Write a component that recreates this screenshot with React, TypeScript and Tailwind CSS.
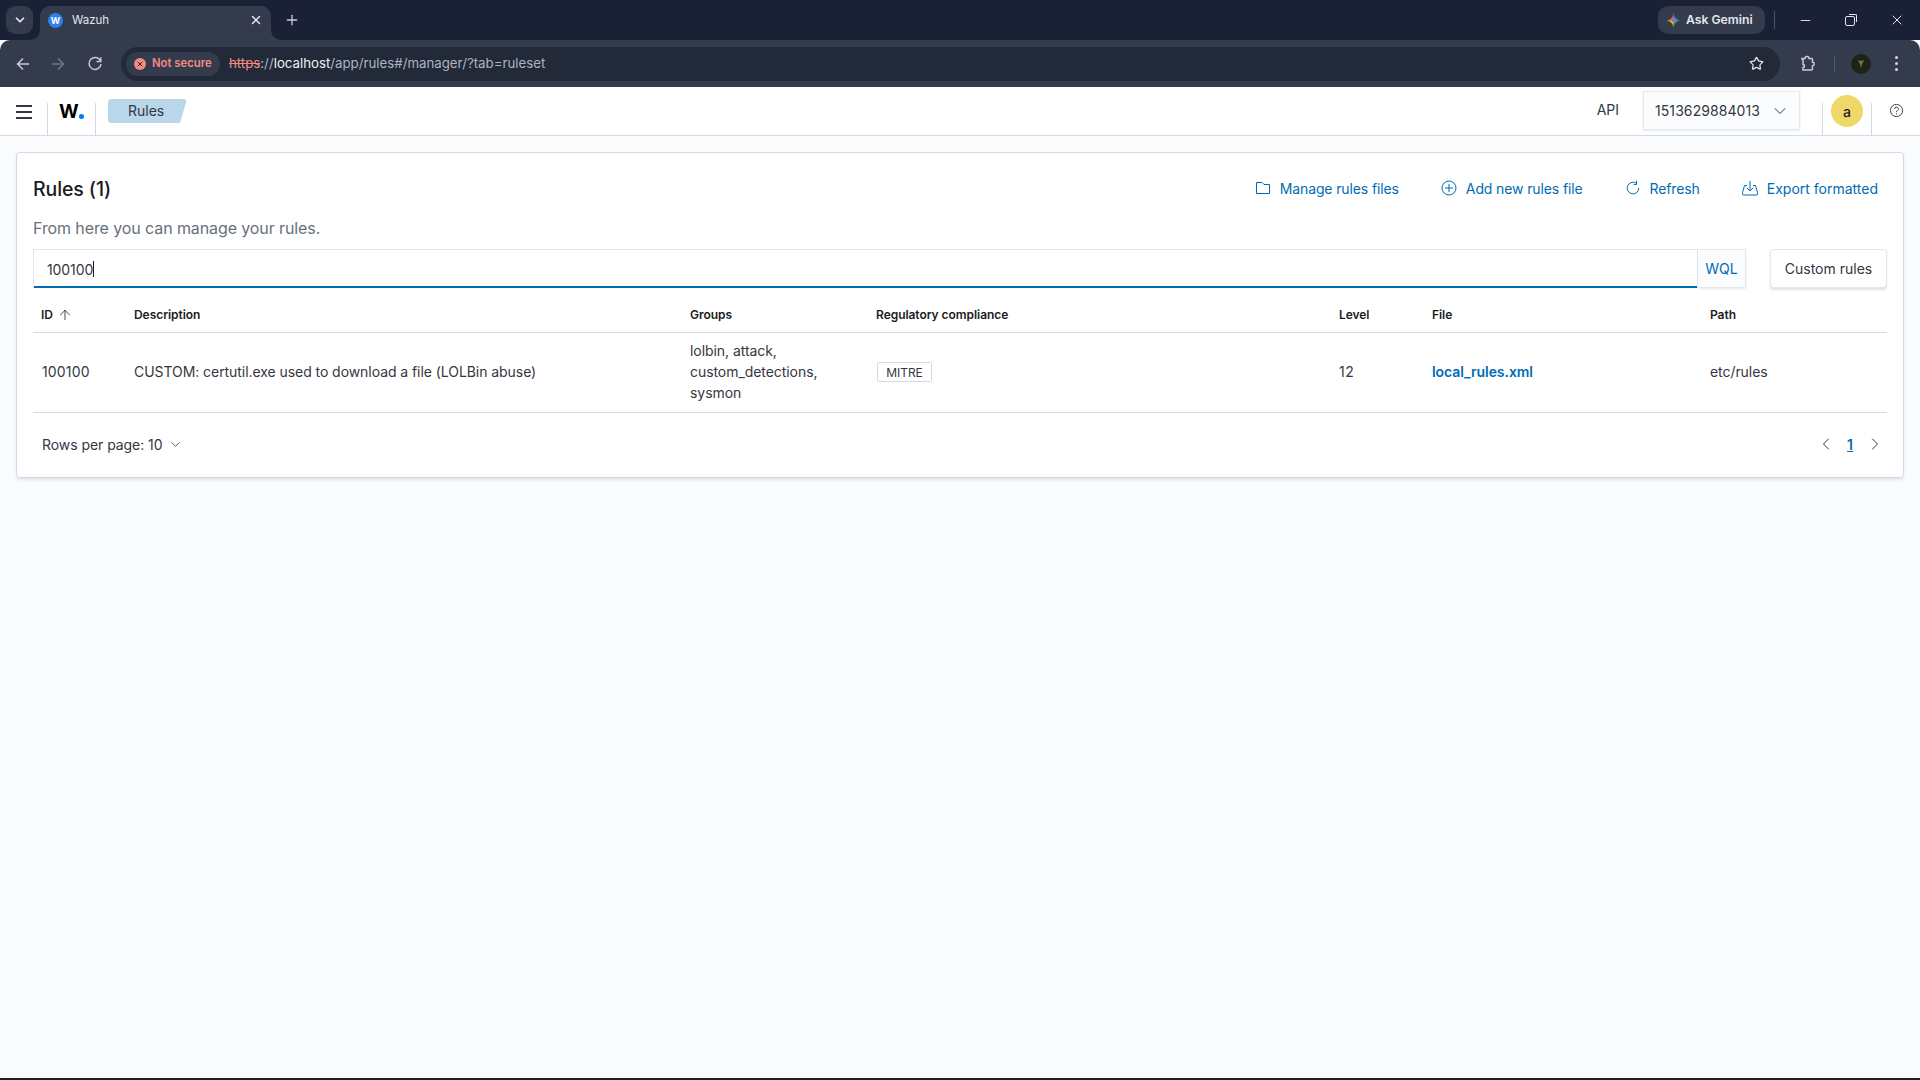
import React from "react";
import { ArrowUp, ChevronDown, ChevronLeft, ChevronRight, Star, X, Plus, Minus } from "lucide-react";

function FolderIcon() {
  return (
    <svg width="16" height="16" viewBox="0 0 16 16" fill="none" stroke="#006bb4" strokeWidth="1">
      <path d="M1.500 2.500h5.500l2 2h5.500v9h-13z" />
    </svg>
  );
}
function AddIcon() {
  return (
    <svg width="16" height="16" viewBox="0 0 16 16" fill="none" stroke="#006bb4" strokeWidth="1">
      <circle cx="8" cy="8" r="7" />
      <path d="M8 4v8M4 8h8" />
    </svg>
  );
}
function RefreshIcon() {
  return (
    <svg width="16" height="16" viewBox="0 0 16 16" fill="none" stroke="#006bb4" strokeWidth="1">
      <path d="M10.800 3A5.800 5.800 0 1 0 13.800 8" />
      <path d="M11.500 0.800v3.700h-2.800" />
    </svg>
  );
}
function ExportIcon() {
  return (
    <svg width="16" height="16" viewBox="0 0 16 16" fill="none" stroke="#006bb4" strokeWidth="1">
      <path d="M5 5.500h-2.500l-2 7v1.500q0 1 1 1h13q1 0 1-1v-1.500l-2-7h-2.500" />
      <path d="M8 1v10M4.800 7.800l3.200 3.200 3.200-3.200" />
    </svg>
  );
}
function Gemini() {
  return (
    <svg width="15" height="15" viewBox="0 0 16 16">
      <path d="M8 0C8.500 4.500 11 7.500 16 8L8 8Z" fill="#4a8af4" />
      <path d="M8 0C7.500 4.500 5 7.500 0 8L8 8Z" fill="#ee5b4c" />
      <path d="M8 16C7.500 11.500 5 8.500 0 8L8 8Z" fill="#f5bb2a" />
      <path d="M8 16C8.500 11.500 11 8.500 16 8L8 8Z" fill="#35ab63" />
      <circle cx="8" cy="8" r="1.800" fill="#8a6fd8" />
    </svg>
  );
}
function BackIcon({ flip, color }: { flip?: boolean; color: string }) {
  return (
    <svg width="16" height="16" viewBox="0 0 16 16" fill="none" stroke={color} strokeWidth="1.500" className={flip ? "-scale-x-100" : ""}>
      <path d="M14 8H2.500M8 2.500 2.500 8 8 13.500" />
    </svg>
  );
}
function ReloadIcon() {
  return (
    <svg width="16" height="16" viewBox="0 0 16 16" fill="none" stroke="#c7cbd4" strokeWidth="1.500">
      <path d="M13.500 5A6 6 0 1 0 14 8" />
      <path d="M13.800 1.200v4.300h-4.300" />
    </svg>
  );
}
function ExtensionIcon() {
  return (
    <svg width="18" height="18" viewBox="0 0 18 18" fill="none" stroke="#c7cbd4" strokeWidth="1.500">
      <path d="M3.500 3.500h3a2 2 0 0 1 4 0h2.500a1 1 0 0 1 1 1v2.800a1.700 1.700 0 0 1 0 3.400v3.300a1 1 0 0 1-1 1h-8.500v-2.500a1.500 1.500 0 0 0 0-3v-5.500a0.500 0.500 0 0 1-1 0z" transform="translate(0.500 0)" />
    </svg>
  );
}
function Corner({ side }: { side: "left" | "right" }) {
  return (
    <svg width="10" height="10" viewBox="0 0 10 10" className={"absolute bottom-0 " + (side === "left" ? "left-[-10px]" : "right-[-10px] -scale-x-100")}>
      <path d="M10 0v10H0A10 10 0 0 0 10 0z" fill="#333b4d" />
    </svg>
  );
}

function Action({ icon, label, tight }: { icon: React.ReactNode; label: string; tight?: boolean }) {
  return (
    <div className={"flex items-center gap-[9px] text-[14px] text-[#006bb4] " + (tight ? "tracking-[-0.120px]" : "")}>
      {icon}
      <span>{label}</span>
    </div>
  );
}

const grid = "grid grid-cols-[93px_556px_186px_463px_93px_278px_185px] border-b border-[#d3dae6]";

export default function App() {
  return (
    <div className="w-[1920px] h-[1080px] flex flex-col overflow-hidden bg-[#fafbfd] font-['Inter',sans-serif] text-[#343741]">
      {/* Browser tab strip */}
      <div className="h-[40px] bg-[#1a2035] flex items-start pt-[6px] pl-[6px] shrink-0">
        <div className="w-[27px] h-[28px] rounded-[9px] bg-[#333b4d] flex items-center justify-center">
          <ChevronDown size={14} strokeWidth={3} color="#e3e6ec" />
        </div>
        <div className="relative ml-[7px] w-[231px] h-[34px] rounded-t-[10px] bg-[#333b4d] flex items-center pl-[8px] pr-[8px] pb-[6px]">
          <Corner side="left" />
          <Corner side="right" />
          <div className="w-[15px] h-[15px] rounded-full bg-[#2f80ed] flex items-center justify-center text-[9px] font-bold text-white leading-none">W</div>
          <span className="ml-[9px] mt-[1px] text-[11.500px] text-[#e3e6ec]">Wazuh</span>
          <X size={14} color="#e3e6ec" strokeWidth={2.500} className="ml-auto" />
        </div>
        <Plus size={16} color="#c7cbd4" strokeWidth={2} className="ml-[13px] mt-[6px]" />
        <div className="ml-auto flex items-center h-[28px]">
          <div className="w-[107px] h-[28px] rounded-[10px] bg-[#333b4d] flex items-center pl-[8px] gap-[5px] text-[12.200px] font-semibold text-[#e3e6ec]">
            <Gemini />
            <span>Ask Gemini</span>
          </div>
          <div className="w-px h-[18px] bg-[#4a5163] ml-[9px]" />
          <Minus size={15} color="#e3e6ec" strokeWidth={1.500} className="ml-[23px]" />
          <div className="ml-[32px] relative w-[10px] h-[10px] border border-[#e3e6ec] rounded-[2px] mt-[2px]">
            <div className="absolute right-[-3px] top-[-3px] w-[8px] h-[8px] border-t border-r border-[#e3e6ec] rounded-tr-[2px]" />
          </div>
          <X size={16} color="#e3e6ec" strokeWidth={1.500} className="ml-[34px] mr-[15px]" />
        </div>
      </div>
      {/* Browser toolbar */}
      <div className="h-[47px] bg-[#333b4d] flex items-center shrink-0 rounded-t-[10px]">
        <div className="ml-[15px]"><BackIcon color="#c7cbd4" /></div>
        <div className="ml-[19px]"><BackIcon flip color="#70778a" /></div>
        <div className="ml-[21px]"><ReloadIcon /></div>
        <div className="ml-[18px] w-[1659px] h-[34px] rounded-full bg-[#222938] flex items-center pl-[5px] pr-[16px]">
          <div className="w-[94px] h-[24px] rounded-full bg-[#333b4d] flex items-center pl-[8px] gap-[6px] text-[11.300px] font-semibold text-[#f28b82] whitespace-nowrap">
            <div className="w-[12px] h-[12px] rounded-full bg-[#f28b82] flex items-center justify-center shrink-0">
              <X size={8} strokeWidth={3} color="#222938" />
            </div>
            <span>Not secure</span>
          </div>
          <div className="ml-[9px] text-[13.250px] text-[#aeb4c0]">
            <span className="text-[#f28b82] line-through">https</span>://<span className="text-[#f0f2f5]">localhost</span>/app/rules#/manager/?tab=ruleset
          </div>
          <Star size={15} color="#e3e6ec" strokeWidth={2} className="ml-auto" />
        </div>
        <div className="ml-[18px]"><ExtensionIcon /></div>
        <div className="ml-[18px] w-px h-[18px] bg-[#4f566a]" />
        <div className="ml-[16px] w-[20px] h-[20px] rounded-full bg-[#1c2418] flex items-center justify-center">
          <svg width="8" height="10" viewBox="0 0 8 10"><path d="M1 1l3 1 3-1-2 4-1 4-1-4z" fill="#8a7440" /></svg>
        </div>
        <div className="ml-[24px] flex flex-col gap-[3px]">
          <div className="w-[3px] h-[3px] rounded-full bg-[#d5d8df]" />
          <div className="w-[3px] h-[3px] rounded-full bg-[#d5d8df]" />
          <div className="w-[3px] h-[3px] rounded-full bg-[#d5d8df]" />
        </div>
      </div>
      {/* App header */}
      <div className="h-[49px] bg-white border-b border-[#d3dae6] flex shrink-0">
        <div className="w-[47px] flex items-start justify-center pt-[18px]">
          <div className="flex flex-col gap-[4px]">
            <div className="w-[16px] h-[2px] bg-[#343741]" />
            <div className="w-[16px] h-[2px] bg-[#343741]" />
            <div className="w-[16px] h-[2px] bg-[#343741]" />
          </div>
        </div>
        <div className="w-[49px] mt-[16px] border-l border-r border-[#d3dae6] flex items-start justify-center">
          <div className="flex items-end mt-[-1px]">
            <span className="text-[19px] leading-[20px] font-bold text-black tracking-[-0.500px]">W</span>
            <div className="w-[5px] h-[5px] rounded-full bg-[#0077ff] mb-[3px] ml-[1px]" />
          </div>
        </div>
        <div className="ml-[12px] mt-[12px] w-[79px] h-[24px] rounded-[4px] bg-[#b9d6ea] [clip-path:polygon(0_0,100%_0,calc(100%-7px)_100%,0_100%)] text-[14px] leading-[24px] pl-[20px] text-[#343741]">
          Rules
        </div>
        <div className="ml-auto text-[14px] leading-[46px] text-[#343741]">API</div>
        <div className="ml-[24px] mt-[4px] w-[157px] h-[39px] bg-[#fbfcfd] border border-[#e4e7ee] shadow-[0_1px_2px_rgba(152,162,179,0.25)] flex items-center pl-[11px] text-[14px] text-[#343741]">
          <span className="tracking-[0.080px]">1513629884013</span>
          <ChevronDown size={20} strokeWidth={1.200} className="ml-[10px]" />
        </div>
        <div className="ml-[22px] mt-[16px] w-[50px] border-l border-r border-[#d3dae6] flex justify-center items-start">
          <div className="mt-[-8px] w-[32px] h-[32px] rounded-full bg-[#f0d76a] flex items-center justify-center text-[14px] font-medium text-[#1a1c21]">a</div>
        </div>
        <div className="w-[48px] flex justify-center items-start pt-[16px]">
          <svg width="15" height="15" viewBox="0 0 16 16" fill="none" stroke="#343741" strokeWidth="1">
            <circle cx="8" cy="8" r="6.500" />
            <path d="M6 6.300a2 2 0 1 1 3 1.700c-.7.400-1 .8-1 1.700" />
            <path d="M8 11v1.200" />
          </svg>
        </div>
      </div>
      {/* Page */}
      <div className="flex-1 min-h-0 px-[16px] pt-[16px]">
        <div className="bg-white border border-[#d3dae6] rounded-[4px] shadow-[0_2px_3px_rgba(152,162,179,0.25)] p-[16px] pb-[17px]">
          <div className="flex items-center h-[40px]">
            <h1 className="text-[19.500px] font-medium text-[#1a1c21] tracking-[-0.100px] mt-[1px]">Rules (1)</h1>
            <div className="ml-auto flex items-center gap-[42px] pr-[9px] mt-[-2px]">
              <Action icon={<FolderIcon />} label="Manage rules files" tight />
              <Action icon={<AddIcon />} label="Add new rules file" tight />
              <Action icon={<RefreshIcon />} label="Refresh" tight />
              <Action icon={<ExportIcon />} label="Export formatted" />
            </div>
          </div>
          <p className="text-[16px] leading-[24px] mt-[7px] text-[#69707d] tracking-[-0.100px]">From here you can manage your rules.</p>
          <div className="flex mt-[9px] h-[39px]">
            <div className="flex-1 flex items-center pl-[13px] text-[14px] text-[#343741] border border-b-0 border-[#e4e7ee] shadow-[inset_0_-2px_0_#006bb4]">
              <span className="tracking-[-0.100px]">100100</span>
              <div className="w-px h-[16px] bg-[#1a1c21]" />
            </div>
            <div className="w-[48px] flex items-center justify-center text-[14px] text-[#006bb4] bg-[#fbfcfd] border border-l-0 border-[#e4e7ee] shadow-[0_1px_2px_rgba(152,162,179,0.25)]">WQL</div>
            <div className="ml-[24px] w-[117px] flex items-center justify-center text-[14px] rounded-[4px] border border-[#e4e7ee] bg-white shadow-[0_2px_2px_rgba(152,162,179,0.3)]">Custom rules</div>
          </div>
          <div className={grid + " mt-[10px] h-[35px] items-center text-[12px] font-semibold text-[#1a1c21] tracking-[-0.050px]"}>
            <div className="pl-[8px] flex items-center gap-[4px]">ID <ArrowUp size={16} strokeWidth={1.200} /></div>
            <div className="pl-[8px]">Description</div>
            <div className="pl-[8px]">Groups</div>
            <div className="pl-[8px]">Regulatory compliance</div>
            <div className="pl-[8px]">Level</div>
            <div className="pl-[8px]">File</div>
            <div className="pl-[8px]">Path</div>
          </div>
          <div className={grid + " h-[80px] items-center text-[14px] leading-[21px] pb-[2px] tracking-[-0.060px]"}>
            <div className="pl-[9px] tracking-[0.150px]">100100</div>
            <div className="pl-[8px]">CUSTOM: certutil.exe used to download a file (LOLBin abuse)</div>
            <div className="pl-[8px]">lolbin, attack,<br />custom_detections,<br />sysmon</div>
            <div className="pl-[9px]">
              <span className="inline-flex items-center justify-center w-[55px] h-[20px] border border-[#d3dae6] rounded-[2px] text-[12px]">MITRE</span>
            </div>
            <div className="pl-[8px] tracking-[0.500px]">12</div>
            <div className="pl-[8px] font-semibold text-[#006bb4]">local_rules.xml</div>
            <div className="pl-[8px]">etc/rules</div>
          </div>
          <div className="flex items-center h-[32px] mt-[15px] text-[14px]">
            <span className="ml-[9px] tracking-[-0.060px]">Rows per page: 10</span>
            <ChevronDown size={15} strokeWidth={1.300} className="ml-[6px]" />
            <ChevronLeft size={20} strokeWidth={1.200} className="ml-auto" />
            <span className="ml-[11px] mr-[1px] font-semibold text-[#006bb4] underline">1</span>
            <ChevronRight size={20} strokeWidth={1.200} className="ml-[11px] mr-[2px]" />
          </div>
        </div>
      </div>
      <div className="h-[2px] bg-[#1f1f1f] shrink-0" />
    </div>
  );
}
